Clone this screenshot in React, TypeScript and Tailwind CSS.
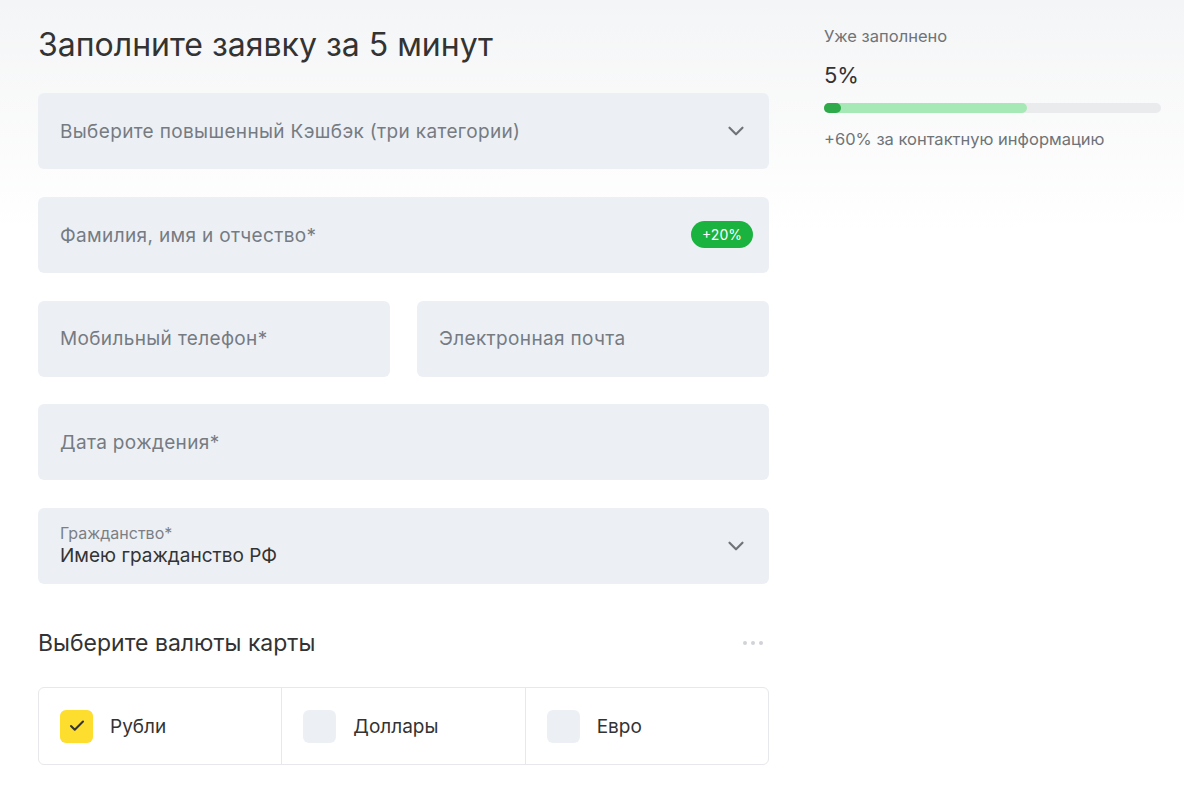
import { Check, ChevronDown } from "lucide-react";

function Field({ label, badge, select, className = "" }: {
  label: string;
  badge?: string;
  select?: boolean;
  className?: string;
}) {
  return (
    <div
      className={`h-[76px] rounded-md bg-[#ecf0f5] pl-[22px] flex items-center justify-between ${
        badge ? "pr-[16px]" : "pr-[22px]"
      } ${className}`}
    >
      <span className="pt-[2px] text-[19px] tracking-[0.35px] text-[#767b82]">{label}</span>
      {badge && (
        <span className="rounded-full bg-[#1ab33f] px-[11px] h-[27px] flex items-center text-[14px] text-white">
          {badge}
        </span>
      )}
      {select && <ChevronDown className="w-[26px] h-[26px] text-[#707479] -mr-[2px]" strokeWidth={2} />}
    </div>
  );
}

function Currency({ name, checked, last }: { name: string; checked?: boolean; last?: boolean }) {
  return (
    <div className={`flex-1 flex items-center gap-[17px] px-[21px] ${last ? "" : "border-r border-[#e6e8eb]"}`}>
      <div
        className={`w-[33px] h-[33px] rounded-md flex items-center justify-center ${
          checked ? "bg-[#fddd2d]" : "bg-[#ecf0f5]"
        }`}
      >
        {checked && <Check className="w-[18px] h-[18px] text-[#333]" strokeWidth={2.75} />}
      </div>
      <span className="pt-[2px] text-[19px] text-[#333]">{name}</span>
    </div>
  );
}

export default function App() {
  return (
    <div
      className="min-h-[805px] bg-gradient-to-b from-[#f4f5f6] to-white to-[230px] text-[#333]"
      style={{ fontFamily: "Inter, Roboto, sans-serif" }}
    >
      <div className="flex pl-[38px] pt-[24px]">
        <div className="w-[731px]">
          <h1 className="text-[32px] leading-[42px] text-[#333] mb-[27px]">Заполните заявку за 5 минут</h1>

          <div className="flex flex-col gap-[27.75px]">
            <Field label="Выберите повышенный Кэшбэк (три категории)" select />
            <Field label="Фамилия, имя и отчество*" badge="+20%" />
            <div className="flex gap-[27px]">
              <Field label="Мобильный телефон*" className="flex-1" />
              <Field label="Электронная почта" className="flex-1" />
            </div>
            <Field label="Дата рождения*" />
            <div className="h-[76px] rounded-md bg-[#ecf0f5] px-[22px] flex items-center justify-between">
              <div className="flex flex-col">
                <span className="text-[16px] leading-[20px] text-[#7b7f85]">Гражданство*</span>
                <span className="text-[19px] leading-[26px] text-[#333]">Имею гражданство РФ</span>
              </div>
              <ChevronDown className="w-[26px] h-[26px] text-[#707479] -mr-[2px]" strokeWidth={2} />
            </div>
          </div>

          <div className="flex items-center justify-between mt-[44px] mb-[29px]">
            <h2 className="text-[23px] leading-[30px] text-[#333]">Выберите валюты карты</h2>
            <div className="flex gap-[4px] mr-[6px]">
              <span className="w-[4px] h-[4px] rounded-full bg-[#d0d3d7]" />
              <span className="w-[4px] h-[4px] rounded-full bg-[#d0d3d7]" />
              <span className="w-[4px] h-[4px] rounded-full bg-[#d0d3d7]" />
            </div>
          </div>

          <div className="h-[78px] flex rounded-md border border-[#e6e8eb] bg-white">
            <Currency name="Рубли" checked />
            <Currency name="Доллары" />
            <Currency name="Евро" last />
          </div>
        </div>

        <div className="ml-[55px] w-[337px] pt-[1px]">
          <div className="text-[16.5px] leading-[22px] text-[#6f7378]">Уже заполнено</div>
          <div className="text-[22px] leading-[28px] text-[#333] mt-[14px]">5%</div>
          <div className="relative h-[10px] rounded-full bg-[#e9ebed] mt-[14px]">
            <div className="absolute left-0 top-0 h-full w-[203px] rounded-full bg-[#a6e9b6]" />
            <div className="absolute left-0 top-0 h-full w-[17px] rounded-full bg-[#2faa4a]" />
          </div>
          <div className="text-[16.5px] leading-[22px] text-[#6f7378] mt-[15px]">+60% за контактную информацию</div>
        </div>
      </div>
    </div>
  );
}
